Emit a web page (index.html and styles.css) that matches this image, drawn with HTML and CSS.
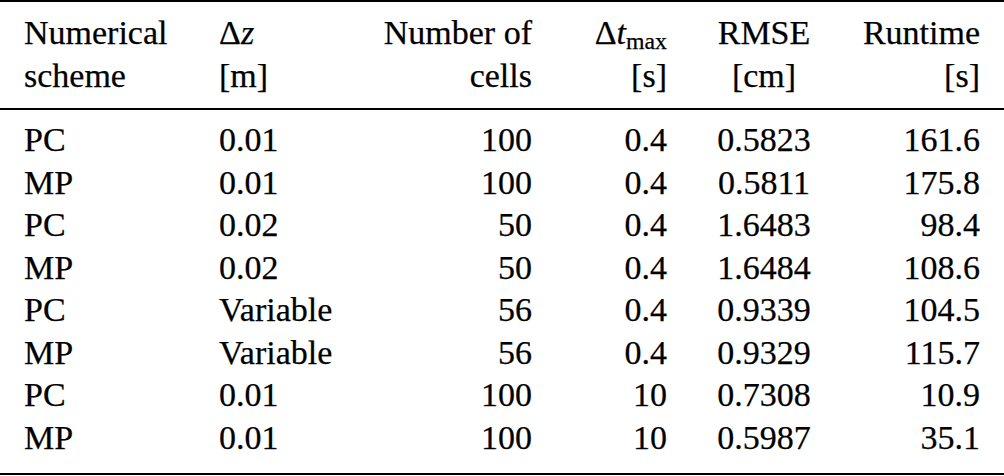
FILE: index.html
```html
<!DOCTYPE html>
<html>
<head>
<meta charset="utf-8">
<link rel="stylesheet" href="styles.css">
</head>
<body>
<table class="results">
  <colgroup>
    <col class="c1"><col class="c2"><col class="c3"><col class="c4"><col class="c5"><col class="c6">
  </colgroup>
  <thead>
    <tr>
      <th class="first left">Numerical<br>scheme</th>
      <th class="left">Δ<i>z</i><br>[m]</th>
      <th class="right">Number of<br>cells</th>
      <th class="right">Δ<i>t</i><span class="sub">max</span><br>[s]</th>
      <th class="center">RMSE<br>[cm]</th>
      <th class="last right">Runtime<br>[s]</th>
    </tr>
  </thead>
  <tbody>
    <tr><td class="first left">PC</td><td class="left">0.01</td><td class="right">100</td><td class="right">0.4</td><td class="center">0.5823</td><td class="last right">161.6</td></tr>
    <tr><td class="first left">MP</td><td class="left">0.01</td><td class="right">100</td><td class="right">0.4</td><td class="center">0.5811</td><td class="last right">175.8</td></tr>
    <tr><td class="first left">PC</td><td class="left">0.02</td><td class="right">50</td><td class="right">0.4</td><td class="center">1.6483</td><td class="last right">98.4</td></tr>
    <tr><td class="first left">MP</td><td class="left">0.02</td><td class="right">50</td><td class="right">0.4</td><td class="center">1.6484</td><td class="last right">108.6</td></tr>
    <tr><td class="first left">PC</td><td class="left">Variable</td><td class="right">56</td><td class="right">0.4</td><td class="center">0.9339</td><td class="last right">104.5</td></tr>
    <tr><td class="first left">MP</td><td class="left">Variable</td><td class="right">56</td><td class="right">0.4</td><td class="center">0.9329</td><td class="last right">115.7</td></tr>
    <tr><td class="first left">PC</td><td class="left">0.01</td><td class="right">100</td><td class="right">10</td><td class="center">0.7308</td><td class="last right">10.9</td></tr>
    <tr><td class="first left">MP</td><td class="left">0.01</td><td class="right">100</td><td class="right">10</td><td class="center">0.5987</td><td class="last right">35.1</td></tr>
  </tbody>
</table>
</body>
</html>
```

FILE: styles.css
```css
html, body {
  margin: 0;
  padding: 0;
  background: #ffffff;
}

.results {
  width: 1004px;
  border-collapse: collapse;
  table-layout: fixed;
  font-family: "Liberation Serif", "Times New Roman", serif;
  font-size: 34px;
  line-height: 42.5px;
  color: #000000;
  -webkit-text-stroke: 0.25px #000000;
}

.c1 { width: 219px; }
.c2 { width: 151px; }
.c3 { width: 162px; }
.c4 { width: 135px; }
.c5 { width: 194px; }
.c6 { width: 143px; }

.results th,
.results td {
  padding: 0;
  font-weight: normal;
  white-space: nowrap;
}

.results thead tr {
  border-top: 2px solid #000000;
  border-bottom: 2px solid #000000;
}

.results thead th {
  padding-top: 10px;
  padding-bottom: 11px;
  vertical-align: top;
}

.results tbody tr:first-child td {
  padding-top: 9px;
}

.results tbody tr:last-child td {
  padding-bottom: 14px;
}

.results tbody tr:last-child {
  border-bottom: 2px solid #000000;
}

.left { text-align: left; }
.right { text-align: right; }
.center { text-align: center; }

.first { padding-left: 24px !important; }
.last { padding-right: 24px !important; }

.results i {
  font-style: italic;
}

.sub {
  font-size: 0.7em;
  position: relative;
  top: 0.22em;
  line-height: 0;
}
```
